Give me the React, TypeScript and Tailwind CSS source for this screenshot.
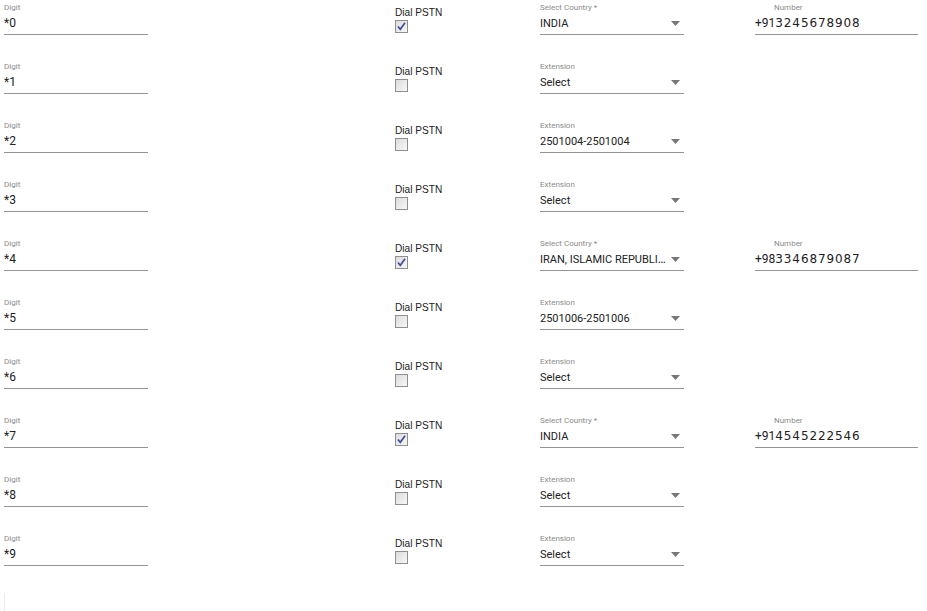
import React from "react";

type Row = {
  digit: string;
  pstn: boolean;
  selLabel: string;
  selValue: string;
  prefix?: string;
  number?: string;
};

const rows: Row[] = [
  { digit: "*0", pstn: true, selLabel: "Select Country *", selValue: "INDIA", prefix: "+91", number: "3245678908" },
  { digit: "*1", pstn: false, selLabel: "Extension", selValue: "Select" },
  { digit: "*2", pstn: false, selLabel: "Extension", selValue: "2501004-2501004" },
  { digit: "*3", pstn: false, selLabel: "Extension", selValue: "Select" },
  { digit: "*4", pstn: true, selLabel: "Select Country *", selValue: "IRAN, ISLAMIC REPUBLIC OF", prefix: "+98", number: "3346879087" },
  { digit: "*5", pstn: false, selLabel: "Extension", selValue: "2501006-2501006" },
  { digit: "*6", pstn: false, selLabel: "Extension", selValue: "Select" },
  { digit: "*7", pstn: true, selLabel: "Select Country *", selValue: "INDIA", prefix: "+91", number: "4545222546" },
  { digit: "*8", pstn: false, selLabel: "Extension", selValue: "Select" },
  { digit: "*9", pstn: false, selLabel: "Extension", selValue: "Select" },
];

const roboto = { fontFamily: "Roboto, 'Liberation Sans', sans-serif" };

function Field({
  label,
  children,
  width,
  indentLabel = false,
  arrow = false,
}: {
  label: string;
  children: React.ReactNode;
  width: string;
  indentLabel?: boolean;
  arrow?: boolean;
}) {
  return (
    <div className={`${width} pt-[3px]`} style={roboto}>
      <div
        className={`h-[10px] text-[8px] leading-[10px] text-[#8a8a8a] ${indentLabel ? "pl-[19px]" : ""}`}
      >
        {label}
      </div>
      <div className="flex h-[22px] items-center border-b border-[#949494]">
        <span className="min-w-0 flex-1 truncate text-[12px] leading-[21px] text-[#222]">{children}</span>
        {arrow && (
          <svg width="9" height="5" viewBox="0 0 9 5" className="ml-[4px] mr-[4px] shrink-0">
            <path d="M0 0 H9 L4.5 5 Z" fill="#777" />
          </svg>
        )}
      </div>
    </div>
  );
}

function Checkbox({ checked }: { checked: boolean }) {
  return (
    <span className="mt-[1px] flex h-[13px] w-[13px] items-center justify-center border border-[#8f8f8f] bg-gradient-to-br from-[#dcdcdc] to-[#f8f8f8]">
      {checked && (
        <svg width="11" height="11" viewBox="0 0 11 11">
          <path d="M2 5.5 L4.3 8.3 L9 1.8" fill="none" stroke="#3d4f9a" strokeWidth="1.7" />
        </svg>
      )}
    </span>
  );
}

export default function App() {
  return (
    <div className="min-h-[611px] w-[927px] bg-white">
      {rows.map((r, i) => (
        <div key={i} className="flex h-[59px] items-start">
          <div className="ml-[4px]">
            <Field label="Digit" width="w-[144px]">
              {r.digit}
            </Field>
          </div>
          <div className="ml-[247px] w-[145px] pt-[5px]">
            <div
              className="origin-left scale-x-[0.92] whitespace-nowrap text-[11px] leading-[14px] text-[#222]"
              style={{ fontFamily: "'Liberation Sans', Arial, sans-serif" }}
            >
              Dial PSTN
            </div>
            <Checkbox checked={r.pstn} />
          </div>
          <Field label={r.selLabel} width="w-[144px]" arrow>
            <span className="text-[11px]">{r.selValue}</span>
          </Field>
          {r.number && (
            <div className="ml-[71px]">
              <Field label="Number" width="w-[163px]" indentLabel>
                <span className="text-[12px]">{r.prefix}</span>
                <span
                  className="text-[12px] tracking-[0.9px]"
                  style={{ fontFamily: "'DejaVu Sans', sans-serif" }}
                >
                  {r.number}
                </span>
              </Field>
            </div>
          )}
        </div>
      ))}
      <div className="ml-[4px] mt-[3px] h-[18px] border-l border-[#ececec]" />
    </div>
  );
}
